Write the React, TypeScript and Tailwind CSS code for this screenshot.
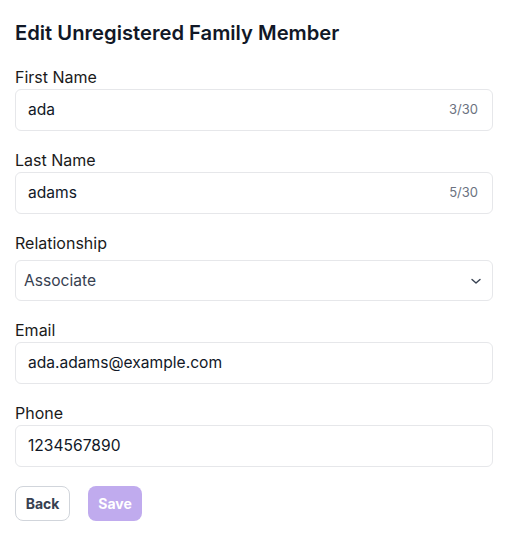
import React from "react";

function Field({ label, value, counter }: { label: string; value: string; counter?: string }) {
  return (
    <div className="flex flex-col">
      <label className="text-base leading-6 text-[#1a1a1a]">{label}</label>
      <div className="flex h-[42px] items-center justify-between rounded-md border border-[#e6e7ea] bg-white pl-3 pr-[14px]">
        <span className="text-[15.6px] text-[#111827]">{value}</span>
        {counter && <span className="text-[13px] text-[#6b7280]">{counter}</span>}
      </div>
    </div>
  );
}

export default function App() {
  return (
    <div className="min-h-[553px] w-[510px] bg-white px-[15px] pt-[19px]" style={{ fontFamily: "Inter, 'Noto Sans', sans-serif" }}>
      <h1 className="text-[20.2px] font-semibold leading-7 text-[#111827]">Edit Unregistered Family Member</h1>
      <div className="mt-[18px] flex w-[478px] flex-col gap-[17px]">
        <Field label="First Name" value="ada" counter="3/30" />
        <Field label="Last Name" value="adams" counter="5/30" />
        <div className="flex flex-col">
          <label className="text-base leading-6 text-[#1a1a1a]">Relationship</label>
          <div className="mt-[5px] flex h-[41px] items-center justify-between rounded-md border border-[#e6e7ea] bg-white pl-2 pr-[10px]">
            <span className="text-[15.6px] text-[#374151]">Associate</span>
            <svg width="12" height="12" viewBox="0 0 12 12" fill="none">
              <path d="M2 4.5 L6 8 L10 4.5" stroke="#374151" strokeWidth="1.4" strokeLinecap="round" strokeLinejoin="round" />
            </svg>
          </div>
        </div>
        <Field label="Email" value="ada.adams@example.com" />
        <Field label="Phone" value="1234567890" />
      </div>
      <div className="mt-[19px] flex gap-[18px]">
        <button className="h-[35px] w-[55px] rounded-lg border border-[#d1d5db] bg-white text-sm font-bold text-[#374151]">Back</button>
        <button className="h-[35px] w-[54px] rounded-lg bg-[#c0abee] text-sm font-bold text-white">Save</button>
      </div>
    </div>
  );
}
